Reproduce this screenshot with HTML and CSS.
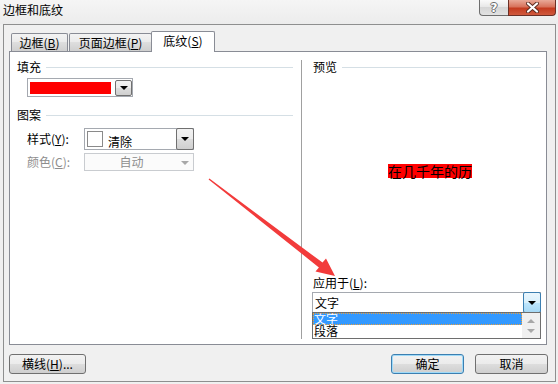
FILE: index.html
```html
<!DOCTYPE html>
<html>
<head>
<meta charset="utf-8">
<link rel="stylesheet" href="styles.css">
</head>
<body>
<div class="titlebar">
  <span class="title">边框和底纹</span>
  <div class="caption-btns">
    <div class="cbtn help">?</div>
    <div class="cbtn close">
      <svg width="13" height="11" viewBox="0 0 13 11">
        <path d="M2 1.5 L11 9.5 M11 1.5 L2 9.5" stroke="#5a2a20" stroke-width="4" stroke-linecap="round"/>
        <path d="M2 1.5 L11 9.5 M11 1.5 L2 9.5" stroke="#ffffff" stroke-width="2.2" stroke-linecap="round"/>
      </svg>
    </div>
  </div>
</div>
<div class="frame">
  <div class="tabs">
    <div class="tab tab1">边框(<u>B</u>)</div>
    <div class="tab tab2">页面边框(<u>P</u>)</div>
    <div class="tab active">底纹(<u>S</u>)</div>
  </div>
  <div class="page">
    <div class="col-left">
      <div class="group-h"><span>填充</span><i class="rule"></i></div>
      <div class="combo fill">
        <span class="swatch"></span>
        <span class="dd-btn small"><i class="tri"></i></span>
      </div>
      <div class="group-h pattern"><span>图案</span><i class="rule"></i></div>
      <div class="row style-row">
        <span class="lbl">样式(<u>Y</u>):</span>
        <div class="combo style">
          <span class="box"></span>
          <span class="val">清除</span>
          <span class="dd-btn full"><i class="tri"></i></span>
        </div>
      </div>
      <div class="row color-row">
        <span class="lbl disabled">颜色(<u>C</u>):</span>
        <div class="combo color">
          <span class="val-center">自动</span>
          <span class="dd-arrow-dis"><i class="tri gray"></i></span>
        </div>
      </div>
    </div>
    <div class="divider"></div>
    <div class="col-right">
      <div class="group-h preview-h"><span>预览</span><i class="rule"></i></div>
      <div class="preview"><span class="sample">在几千年的历</span></div>
      <span class="apply-lbl">应用于(<u>L</u>):</span>
      <div class="combo apply">
        <span class="apply-val">文字</span>
        <span class="dd-btn full focus"><i class="tri"></i></span>
        <div class="droplist">
          <div class="items">
            <div class="item sel">文字</div>
            <div class="item">段落</div>
          </div>
          <div class="vscroll">
            <i class="tri up gray"></i>
            <i class="tri gray"></i>
          </div>
        </div>
      </div>
    </div>
  </div>
  <div class="btnrow">
    <button class="btn hline">横线(<u>H</u>)...</button>
    <span class="spacer"></span>
    <button class="btn default">确定</button>
    <button class="btn">取消</button>
  </div>
</div>
<svg class="arrow" width="558" height="384" viewBox="0 0 558 384">
  <polygon points="209.4,178.5 322.5,262.6 326,258.4 335,276 315.5,271.6 318.9,267.4 208.6,179.5" fill="#f23b3b"/>
</svg>
</body>
</html>
```

FILE: styles.css
```css
* { box-sizing: border-box; margin: 0; padding: 0; }
html, body { width: 558px; height: 384px; overflow: hidden; }
body {
  position: relative;
  background: #f0f0f0;
  font-family: "Noto Sans CJK SC", "Noto Sans", sans-serif;
  font-size: 12px;
  color: #000;
}
u { text-decoration: underline; }

/* title bar */
.titlebar {
  height: 24px;
  display: flex;
  align-items: flex-start;
  background: linear-gradient(#f5f5f5, #ececec);
}
.title { flex: 1; padding: 3px 0 0 3px; line-height: 14px; }
.caption-btns { display: flex; margin-right: 2px; }
.cbtn {
  height: 16px;
  border: 1px solid #6e6e6e;
  border-top: none;
  display: flex;
  align-items: center;
  justify-content: center;
}
.help {
  width: 29px;
  border-right: none;
  border-radius: 0 0 0 4px;
  background: linear-gradient(#fafafa, #e6e6e6 50%, #d6d6d6 50%, #e2e2e2);
  color: #fff;
  font-family: "DejaVu Sans", sans-serif;
  font-weight: bold;
  font-size: 12px;
  line-height: 14px;
  text-shadow: -1px 0 #6a6a6a, 1px 0 #6a6a6a, 0 -1px #6a6a6a, 0 1px #6a6a6a;
}
.close {
  width: 48px;
  border-radius: 0 0 4px 0;
  background: linear-gradient(#e9a998, #d8735c 45%, #c43b1f 55%, #d05a3e);
  border-color: #6b3026;
}

/* frame */
.frame {
  margin-left: 3px;
  width: 553px;
  height: 358px;
  border: 1px solid #8e8f8f;
  padding: 6px 8px 7px 5px;
  display: flex;
  flex-direction: column;
}
.tabs {
  position: relative;
  z-index: 1;
  display: flex;
  align-items: flex-end;
  height: 20px;
  padding-left: 2px;
}
.tab {
  height: 18px;
  border: 1px solid #898c95;
  border-bottom: none;
  border-radius: 2px 2px 0 0;
  background: linear-gradient(#f3f3f3, #ebebeb 45%, #dedede 50%, #cfcfcf);
  display: flex;
  align-items: center;
  justify-content: center;
  line-height: 14px;
  white-space: nowrap;
}
.tab1 { width: 57px; margin-right: 1px; }
.tab2 { width: 83px; }
.tab.active {
  width: 64px;
  height: 21px;
  margin-left: -1px;
  margin-bottom: -1px;
  background: #fff;
  padding-bottom: 2px;
}

.page {
  height: 294px;
  background: #fff;
  border: 1px solid #898c95;
  display: flex;
}
.col-left { width: 291px; padding: 8px 8px 0 7px; }
.divider { width: 1px; background: #a0a0a0; margin: 8px 0 5px; }
.col-right {
  flex: 1;
  padding: 8px 5px 0 10px;
  display: flex;
  flex-direction: column;
}

.group-h { display: flex; align-items: center; height: 14px; line-height: 14px; }
.group-h .rule { flex: 1; height: 1px; background: #d5dfe5; margin-left: 5px; }
.preview-h { padding-left: 1px; }
.group-h.pattern { margin-top: 11px; }

/* combos */
.combo {
  position: relative;
  display: flex;
  align-items: center;
  background: #fff;
  border: 1px solid #a5a9b0;
}
.fill { margin: 4px 0 0 10px; width: 106px; height: 19px; }
.swatch {
  width: 81px;
  height: 12px;
  margin-left: 2px;
  background: #ff0000;
}
.dd-btn {
  display: flex;
  align-items: center;
  justify-content: center;
  border: 1px solid #707070;
  border-radius: 2px;
  background: linear-gradient(#f2f2f2, #ebebeb 50%, #dddddd 50%, #cfcfcf);
}
.dd-btn.small { width: 17px; height: 16px; margin-left: auto; margin-top: 1px; align-self: flex-start; }
.dd-btn.full { align-self: stretch; width: 18px; margin: -1px -1px -1px auto; }
.dd-btn.focus {
  border-color: #3c7fb1;
  background: linear-gradient(#eaf6fd, #d9f0fc 50%, #bee6fd 50%, #a7d9f5);
}
.tri {
  display: block;
  width: 0;
  height: 0;
  border-left: 4px solid transparent;
  border-right: 4px solid transparent;
  border-top: 4px solid #000;
}
.tri.gray { border-top-color: #a8a8a8; }
.tri.up { border-top: none; border-bottom: 4px solid #a8a8a8; }

.row { display: flex; align-items: center; padding-left: 10px; }
.lbl { width: 57px; line-height: 14px; white-space: nowrap; }
.lbl.disabled { color: #8d8d8d; }
.style-row { margin-top: 6px; }
.style { width: 110px; height: 22px; }
.box {
  width: 16px;
  height: 16px;
  margin-left: 2px;
  border: 1px solid #8a8a8a;
  background: #fff;
}
.val { margin-left: 5px; align-self: flex-end; line-height: 14px; }
.color-row { margin-top: 3px; }
.color { width: 110px; height: 18px; border-color: #c9ccd0; background: #fbfbfb; }
.val-center { flex: 1; text-align: center; color: #8d8d8d; line-height: 14px; padding-left: 2px; }
.dd-arrow-dis { width: 17px; display: flex; justify-content: center; padding-top: 1px; }

/* preview */
.preview { height: 202px; padding: 89px 0 0 7px; text-align: center; }
.sample {
  display: inline-block;
  background: #ff0000;
  font-size: 14px;
  line-height: 14px;
  height: 14px;
  white-space: nowrap;
}
.apply-lbl { padding-left: 1px; line-height: 14px; }
.apply { margin-top: 2px; height: 21px; width: 229px; }
.apply-val { padding-left: 2px; line-height: 14px; }

.droplist {
  position: absolute;
  left: -1px;
  top: 100%;
  width: 229px;
  height: 27px;
  border: 1px solid #6e6e6e;
  background: #fff;
  display: flex;
  overflow: hidden;
}
.items { flex: 1; }
.item { height: 12px; line-height: 12px; padding-left: 1px; white-space: nowrap; }
.item.sel {
  background: #3399ff;
  color: #fff;
  outline: 1px dotted #e8a040;
  outline-offset: -1px;
}
.vscroll {
  width: 18px;
  background: #f0f0f0;
  display: flex;
  flex-direction: column;
  align-items: center;
  justify-content: space-between;
  padding: 6px 0 5px;
}

/* buttons */
.btnrow { display: flex; margin: 9px -1px 0 0; height: 20px; }
.spacer { flex: 1; }
.btn {
  height: 20px;
  width: 73px;
  border: 1px solid #707070;
  border-radius: 3px;
  background: linear-gradient(#f2f2f2, #ebebeb 50%, #dddddd 50%, #cfcfcf);
  font-family: inherit;
  font-size: 12px;
  line-height: 14px;
  color: #000;
  padding: 0;
}
.btn.hline { width: 77px; }
.btn.default {
  margin-right: 11px;
  border-color: #3c7fb1;
  box-shadow: inset 0 0 0 1px #9fdaf8;
}

.arrow { position: absolute; left: 0; top: 0; pointer-events: none; }
```
